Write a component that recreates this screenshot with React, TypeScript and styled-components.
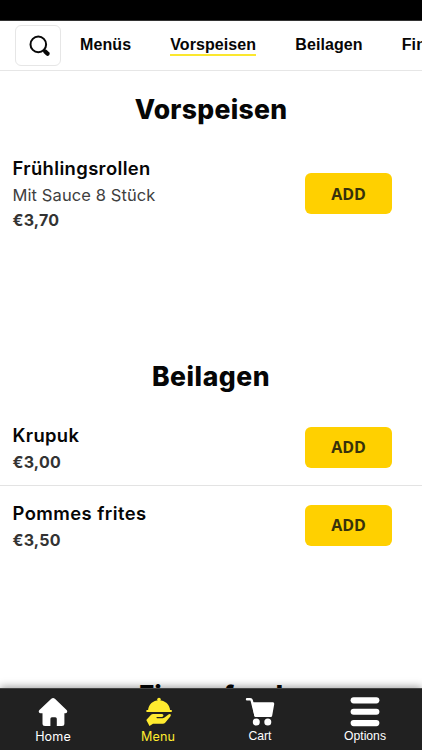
import React from "react";
import styled, { createGlobalStyle } from "styled-components";

const GlobalStyle = createGlobalStyle`
  * { box-sizing: border-box; }
  body { margin: 0; background: #fff; overflow: hidden; }
`;

const Screen = styled.div`
  display: flex;
  flex-direction: column;
  width: 100%;
  height: 100vh;
  overflow: hidden;
  background: #fff;
  color: #060606;
  font-family: Inter, "Liberation Sans", sans-serif;
`;

const StatusBar = styled.div`
  flex: 0 0 21px;
  background: #000;
  border-bottom: 1px solid #333;
`;

const Header = styled.header`
  display: flex;
  flex: 0 0 50px;
  align-items: center;
  padding-left: 15px;
  border-bottom: 1px solid #e6e6e6;
  overflow: hidden;
`;

const SearchButton = styled.button`
  display: grid;
  place-items: center;
  flex: 0 0 46px;
  height: 41px;
  margin: 0 19px 1px 0;
  padding: 1px 0 0 3px;
  border: 1px solid #e6e6e6;
  border-radius: 6px;
  background: #fff;
`;

const Tabs = styled.nav`
  display: flex;
  gap: 39px;
  flex: none;
`;

const Tab = styled.a<{ $active?: boolean }>`
  height: 21px;
  border-bottom: 2px solid ${(p) => (p.$active ? "#fbe72e" : "transparent")};
  font: bold 16px/19px "Liberation Sans", Arial, sans-serif;
  letter-spacing: 0.1px;
  white-space: nowrap;
`;

const Main = styled.main`
  flex: 1 1 0;
  min-height: 0;
  overflow: hidden;
`;

const Section = styled.section<{ $height: number }>`
  height: ${(p) => p.$height}px;
`;

const Title = styled.h2<{ $spacing: number; $height?: number }>`
  margin: 0;
  padding-top: 18px;
  height: ${(p) => p.$height ?? 77}px;
  text-align: center;
  font-size: 26.5px;
  line-height: 40px;
  font-weight: 800;
  letter-spacing: ${(p) => p.$spacing}px;
`;

const Row = styled.article<{ $height: number }>`
  display: flex;
  align-items: center;
  justify-content: space-between;
  height: ${(p) => p.$height}px;
  padding: 0 30px 0 12.5px;

  & + & {
    border-top: 1px solid #e3e3e3;
  }
`;

const Details = styled.div<{ $short: boolean }>`
  display: flex;
  flex-direction: column;
  gap: ${(p) => (p.$short ? 1 : 0)}px;
  padding-top: ${(p) => (p.$short ? 2 : 0)}px;
  white-space: nowrap;
`;

const Name = styled.h3<{ $spacing: number }>`
  margin: 0;
  font-size: 18.4px;
  line-height: 27px;
  font-weight: 600;
  letter-spacing: ${(p) => p.$spacing}px;
`;

const Description = styled.p`
  margin: 0;
  color: #404040;
  font-size: 16.5px;
  line-height: 26px;
  font-weight: 400;
  letter-spacing: 0.1px;
`;

const Price = styled.p`
  margin: 0;
  color: #333;
  font-size: 16px;
  line-height: 25px;
  font-weight: 700;
  letter-spacing: 0.2px;
`;

const AddButton = styled.button`
  width: 87px;
  height: 41px;
  padding: 0;
  border: 0;
  border-radius: 6px;
  background: #ffd000;
  color: #37310b;
  font: bold 16px/40px "Open Sans", "Noto Sans", sans-serif;
`;

const BottomBar = styled.nav`
  position: relative;
  z-index: 1;
  display: grid;
  grid-template-columns: 106px 104px 100px 110px;
  flex: 0 0 62px;
  background: #212121;
  border-top: 1px solid #444;
  box-shadow: 0 -1px 8px rgba(0, 0, 0, 0.4);
`;

const BarItem = styled.a<{ $active?: boolean; $system?: boolean }>`
  display: flex;
  flex-direction: column;
  align-items: center;
  padding-top: 8px;
  color: ${(p) => (p.$active ? "#ffeb2f" : "#fff")};
  font-family: ${(p) => (p.$system ? '"Liberation Sans", Arial' : "Inter")}, sans-serif;
  font-size: ${(p) => (p.$system ? 12.2 : 12.6)}px;
  line-height: 18px;
  letter-spacing: ${(p) => (p.$system ? 0 : 0.1)}px;

  svg {
    display: block;
    flex: none;
    margin-bottom: ${(p) => (p.$system ? 0 : 1)}px;
  }
`;

const SearchIcon = () => (
  <svg width="22" height="22" viewBox="0 0 22 22" fill="none" stroke="#080808">
    <circle cx="9.3" cy="9.4" r="7.8" strokeWidth="2" />
    <path d="M14.6 14.9 16 16.3" strokeWidth="2" />
    <path d="M16.2 16.4 18.600 18.800" strokeWidth="4.2" strokeLinecap="round" />
  </svg>
);

const HomeIcon = () => (
  <svg width="30" height="30" viewBox="0 0 30 30" fill="currentColor">
    <path d="M13.3 1.800a2.700 2.700 0 0 1 3.600 0L28.600 13c1.300 1.300.6 3.200-1.300 3.200h-.9V26.500a2.500 2.500 0 0 1-2.500 2.500h-5.100V21.800a1.500 1.500 0 0 0-1.500-1.500h-3.400a1.500 1.500 0 0 0-1.500 1.500V29H7a2.500 2.500 0 0 1-2.500-2.500V16.200H2.700C.8 16.200.1 14.300 1.400 13Z" />
  </svg>
);

const MenuIcon = () => (
  <svg width="30" height="30" viewBox="0 0 30 30" fill="currentColor">
    <circle cx="16" cy="2.600" r="1.800" />
    <path d="M5 13.200C5.500 7.400 10 3.200 16 3.200s10.600 4.200 11.100 10Z" />
    <rect x="3.200" y="13" width="25.800" height="1.900" rx=".9" />
    <path d="M3.300 22.900 7.600 18.200c.7-.8 1.600-1.200 2.700-1.200h8.200c2.300 0 2.700 2.600.4 3h-4.800c-.9 0-.9 1.200 0 1.200h5.500c1.100 0 1.900-.4 2.600-1.100l3.200-2.500c1.700-1.500 3.400.1 1.900 1.900l-4.900 6c-.7.800-1.600 1.200-2.700 1.200H10l-3.500 2.300Z" />
  </svg>
);

const CartIcon = () => (
  <svg width="30" height="30" viewBox="0 0 30 30" fill="currentColor">
    <path d="M2 2.200h3.200c.8 0 1.300.4 1.500 1.200l3.800 15.100" fill="none" stroke="currentColor" strokeWidth="2.400" strokeLinecap="round" />
    <path d="M6.800 5.300h20.800c1.200 0 1.800.8 1.600 1.900l-2 11.200c-.2 1-.8 1.500-1.700 1.500H10.800c-.8 0-1.300-.4-1.500-1.200Z" />
    <circle cx="11.300" cy="25.100" r="3.500" />
    <circle cx="22.800" cy="25.100" r="3.500" />
  </svg>
);

const OptionsIcon = () => (
  <svg width="30" height="30" viewBox="0 0 30 30" fill="currentColor">
    <rect x=".6" y=".2" width="28.800" height="6.200" rx="3.100" />
    <rect x=".6" y="11.700" width="28.800" height="6" rx="3" />
    <rect x=".6" y="23" width="28.800" height="6.200" rx="3.100" />
  </svg>
);

interface Dish {
  name: string;
  price: string;
  description?: string;
  spacing: number;
  height: number;
}

const DishRow = ({ name, price, description, spacing, height }: Dish) => (
  <Row $height={height}>
    <Details $short={!description}>
      <Name $spacing={spacing}>{name}</Name>
      {description && <Description>{description}</Description>}
      <Price>{price}</Price>
    </Details>
    <AddButton>ADD</AddButton>
  </Row>
);

export default function App() {
  return (
    <Screen>
      <GlobalStyle />
      <StatusBar />
      <Header>
        <SearchButton aria-label="Suche"><SearchIcon /></SearchButton>
        <Tabs>
          <Tab>Menüs</Tab>
          <Tab $active>Vorspeisen</Tab>
          <Tab>Beilagen</Tab>
          <Tab>Fingerfood</Tab>
        </Tabs>
      </Header>
      <Main>
        <Section $height={267}>
          <Title $spacing={0.3}>Vorspeisen</Title>
          <DishRow name="Frühlingsrollen" description="Mit Sauce 8 Stück" price="€3,70" spacing={0.38} height={91} />
        </Section>
        <Section $height={319}>
          <Title $spacing={0.55} $height={71}>Beilagen</Title>
          <DishRow name="Krupuk" price="€3,00" spacing={0.35} height={76} />
          <DishRow name="Pommes frites" price="€3,50" spacing={0.43} height={79} />
        </Section>
        <Section $height={267}>
          <Title $spacing={0}>Fingerfood</Title>
        </Section>
      </Main>
      <BottomBar>
        <BarItem><HomeIcon />Home</BarItem>
        <BarItem $active><MenuIcon />Menu</BarItem>
        <BarItem $system><CartIcon />Cart</BarItem>
        <BarItem $system><OptionsIcon />Options</BarItem>
      </BottomBar>
    </Screen>
  );
}
